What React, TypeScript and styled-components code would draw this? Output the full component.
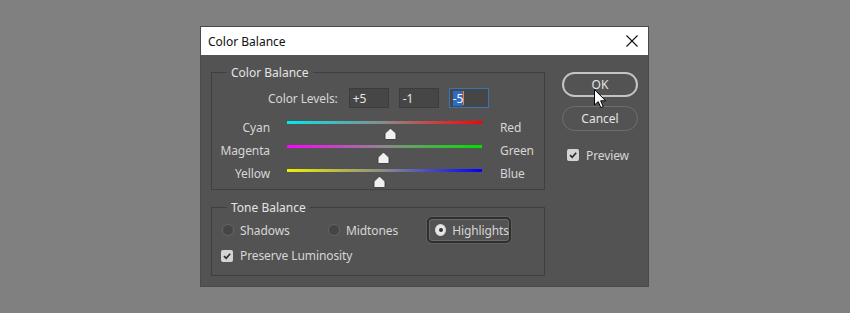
import styled, { createGlobalStyle } from 'styled-components';

const GlobalStyle = createGlobalStyle`
  html, body {
    margin: 0;
    padding: 0;
    background: #808080;
    font-family: "Noto Sans", "Open Sans", sans-serif;
  }
`;

const Page = styled.div`
  width: 850px;
  height: 313px;
  padding: 27px 0 0 201px;
  box-sizing: border-box;
`;

const Dialog = styled.div`
  position: relative;
  width: 447px;
  background: #535353;
  box-shadow: 0 0 0 1px #4a4a4a;
`;

const TitleBar = styled.div`
  height: 28px;
  background: #ffffff;
  display: flex;
  align-items: center;
  justify-content: space-between;
  padding: 0 9px 0 7px;
  font-size: 12px;
  color: #111;
`;

const CloseButton = styled.div`
  width: 14px;
  height: 14px;
  display: flex;
`;

const Body = styled.div`
  display: flex;
  padding: 9px 0 10px 10px;
  gap: 17px;
`;

const LeftColumn = styled.div`
  width: 334px;
  display: flex;
  flex-direction: column;
  gap: 9px;
`;

const Group = styled.fieldset`
  margin: 0;
  padding: 0;
  border: 1px solid #3f3f3f;
  min-width: 0;
`;

const Legend = styled.legend`
  margin-left: 15px;
  padding: 0 4px;
  font-size: 12px;
  line-height: 17px;
  color: #e4e4e4;
`;

const Label = styled.span`
  font-size: 12px;
  letter-spacing: -0.1px;
  color: #d6d6d6;
`;

const LevelsRow = styled.div`
  display: flex;
  align-items: center;
  margin: 7px 0 9px 56px;
  gap: 10px;
`;

const LevelsLabel = styled(Label)`
  margin-right: 1px;
`;

const NumberBox = styled.div<{ $focused?: boolean }>`
  width: 40px;
  height: 20px;
  box-sizing: border-box;
  background: #464646;
  border: 1px solid ${(p) => (p.$focused ? '#3c73b4' : '#3c3c3c')};
  display: flex;
  align-items: center;
  padding-left: 3px;
  font-size: 12px;
  color: #e6e6e6;
`;

const Selected = styled.span`
  background: #2d6bc4;
  color: #ffffff;
  line-height: 15px;
`;

const Caret = styled.span`
  width: 1px;
  height: 14px;
  background: #ff7a1a;
`;

const SliderRow = styled.div`
  display: grid;
  grid-template-columns: 58px 195px auto;
  column-gap: 17px;
  height: 24px;
`;

const SideLabel = styled(Label)<{ $align: 'left' | 'right'; $lift: number }>`
  text-align: ${(p) => p.$align};
  padding-top: ${(p) => 2 - p.$lift}px;
  line-height: 18px;
  margin-left: ${(p) => (p.$align === 'left' ? '1px' : '0')};
`;

const Track = styled.div<{ $from: string; $to: string }>`
  position: relative;
  height: 3px;
  margin-top: 4px;
  background: linear-gradient(
    to right,
    ${(p) => p.$from} 0%,
    #8a8a8a 50%,
    ${(p) => p.$to} 100%
  );
`;

const Thumb = styled.div`
  position: absolute;
  top: 2px;
  width: 13px;
  height: 12px;
  margin-left: -6.5px;
`;

const RadioRow = styled.div`
  display: flex;
  align-items: center;
  margin: 0 0 0 8px;
  height: 28px;
`;

const RadioItem = styled.div<{ $focused?: boolean; $width: number }>`
  display: flex;
  align-items: center;
  gap: 6px;
  width: ${(p) => p.$width}px;
  height: 26px;
  box-sizing: border-box;
  padding-left: ${(p) => (p.$focused ? '6px' : '0')};
  margin-left: ${(p) => (p.$focused ? '-5px' : '0')};
  border-radius: 5px;
  border: ${(p) => (p.$focused ? '2px solid #2f2f2f' : '2px solid transparent')};
  box-shadow: ${(p) => (p.$focused ? 'inset 0 0 0 1px #6a6a6a, 0 0 0 1px #5e5e5e' : 'none')};
`;

const RadioCircle = styled.span<{ $checked?: boolean }>`
  width: 12px;
  height: 12px;
  border-radius: 50%;
  box-sizing: border-box;
  background: ${(p) => (p.$checked ? '#e6e6e6' : '#454545')};
  border: 1px solid ${(p) => (p.$checked ? '#d8d8d8' : '#656565')};
  display: flex;
  align-items: center;
  justify-content: center;

  &::after {
    content: '';
    width: 4px;
    height: 4px;
    border-radius: 50%;
    background: ${(p) => (p.$checked ? '#333' : 'transparent')};
  }
`;

const CheckRow = styled.label`
  display: flex;
  align-items: center;
  gap: 7px;
  margin: 0 0 8px 9px;
  height: 23px;
`;

const CheckBox = styled.span`
  width: 12px;
  height: 12px;
  border-radius: 2px;
  background: #d4d4d4;
  display: flex;
  align-items: center;
  justify-content: center;
`;

const RightColumn = styled.div`
  width: 76px;
  display: flex;
  flex-direction: column;
  padding-top: 8px;
  gap: 9px;
`;

const PillButton = styled.div<{ $primary?: boolean }>`
  height: 25px;
  box-sizing: border-box;
  border-radius: 13px;
  border: ${(p) => (p.$primary ? '2px solid #c4c4c4' : '1px solid #6e6e6e')};
  display: flex;
  align-items: center;
  justify-content: center;
  font-size: 12px;
  color: #e4e4e4;
`;

const PreviewRow = styled(CheckRow)`
  margin: 3px 0 0 5px;
  height: 24px;
`;

const Cursor = styled.svg`
  position: absolute;
  left: 393px;
  top: 62px;
`;

const Check = () => (
  <svg width="10" height="10" viewBox="0 0 10 10">
    <path d="M2 5.2 L4.2 7.3 L8.2 2.8" fill="none" stroke="#2e2e2e" strokeWidth="1.7" />
  </svg>
);

interface SliderProps {
  left: string;
  right: string;
  from: string;
  to: string;
  pos: number;
  lift: number;
}

const Slider = ({ left, right, from, to, pos, lift }: SliderProps) => (
  <SliderRow>
    <SideLabel $align="right" $lift={lift}>{left}</SideLabel>
    <div>
      <Track $from={from} $to={to}>
        <Thumb style={{ left: `${pos}%` }}>
          <svg width="13" height="12" viewBox="0 0 13 12">
            <path
              d="M5.6 1 Q6.5 0.2 7.4 1 L11.6 5 Q12 5.4 12 6 L12 10.5 Q12 11.5 11 11.5 L2 11.5 Q1 11.5 1 10.5 L1 6 Q1 5.4 1.4 5 Z"
              fill="#f0f0f0"
              stroke="#2e2e2e"
              strokeWidth="0.8"
            />
          </svg>
        </Thumb>
      </Track>
    </div>
    <SideLabel $align="left" $lift={lift}>{right}</SideLabel>
  </SliderRow>
);

const App = () => {
  return (
    <Page>
      <GlobalStyle />
      <Dialog>
        <TitleBar>
          <span>Color Balance</span>
          <CloseButton>
            <svg width="14" height="14" viewBox="0 0 14 14">
              <path d="M1.5 1.5 L12.5 12.5 M12.5 1.5 L1.5 12.5" stroke="#111" strokeWidth="1.1" />
            </svg>
          </CloseButton>
        </TitleBar>
        <Body>
          <LeftColumn>
            <Group>
              <Legend>Color Balance</Legend>
              <LevelsRow>
                <LevelsLabel>Color Levels:</LevelsLabel>
                <NumberBox>+5</NumberBox>
                <NumberBox>-1</NumberBox>
                <NumberBox $focused>
                  <Selected>-5</Selected>
                  <Caret />
                </NumberBox>
              </LevelsRow>
              <Slider left="Cyan" right="Red" from="#00e8f0" to="#ff0000" pos={53} lift={0} />
              <Slider left="Magenta" right="Green" from="#ff00ff" to="#00e000" pos={49.5} lift={1} />
              <Slider left="Yellow" right="Blue" from="#f0f000" to="#0000ff" pos={47.5} lift={2} />
            </Group>
            <Group>
              <Legend>Tone Balance</Legend>
              <RadioRow>
                <RadioItem $width={106}>
                  <RadioCircle />
                  <Label>Shadows</Label>
                </RadioItem>
                <RadioItem $width={106}>
                  <RadioCircle />
                  <Label>Midtones</Label>
                </RadioItem>
                <RadioItem $width={84} $focused>
                  <RadioCircle $checked />
                  <Label>Highlights</Label>
                </RadioItem>
              </RadioRow>
              <CheckRow>
                <CheckBox>
                  <Check />
                </CheckBox>
                <Label>Preserve Luminosity</Label>
              </CheckRow>
            </Group>
          </LeftColumn>
          <RightColumn>
            <PillButton $primary>OK</PillButton>
            <PillButton>Cancel</PillButton>
            <PreviewRow>
              <CheckBox>
                <Check />
              </CheckBox>
              <Label>Preview</Label>
            </PreviewRow>
          </RightColumn>
        </Body>
        <Cursor width="13" height="20" viewBox="0 0 13 20">
          <path d="M0.5 0.5 L0.5 16 L4.2 12.6 L6.8 18.6 L9.2 17.6 L6.7 11.8 L11.6 11.8 Z" fill="#ffffff" stroke="#000" strokeWidth="1" strokeLinejoin="round" />
        </Cursor>
      </Dialog>
    </Page>
  );
};

export default App;
